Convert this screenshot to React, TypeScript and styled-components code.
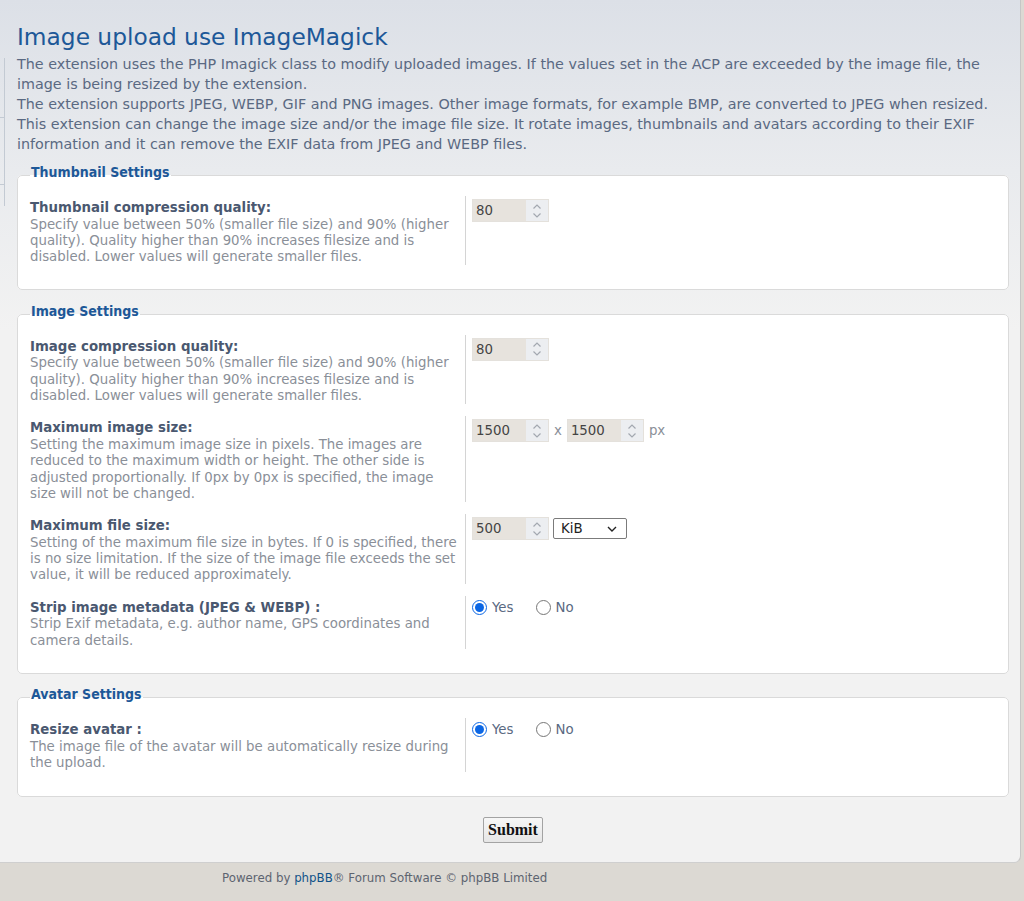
import React from 'react';
import styled, { createGlobalStyle } from 'styled-components';

const GlobalStyle = createGlobalStyle`
  html, body {
    margin: 0;
    padding: 0;
  }
  body {
    background: #dcd9d3;
    font-family: "DejaVu Sans", Verdana, sans-serif;
    font-size: 13.33px;
  }
`;

type Section = {
  legend: string;
  rows: { label: string; desc: string; control: React.ReactNode }[];
};

function Spinner() {
  return (
    <svg width="10" height="18" viewBox="0 0 10 18" fill="none" stroke="#a3a8b0" strokeWidth="1.2">
      <path d="M1.5 6.5 L5 3 L8.5 6.5" />
      <path d="M1.5 11.5 L5 15 L8.5 11.5" />
    </svg>
  );
}

function NumberField({ value }: { value: string }) {
  return (
    <NumberBox>
      <NumberInput type="text" value={value} readOnly />
      <SpinArea>
        <Spinner />
      </SpinArea>
    </NumberBox>
  );
}

function YesNo({ yes }: { yes: boolean }) {
  return (
    <RadioGroup>
      <RadioLabel>
        <Radio type="radio" defaultChecked={yes} />
        Yes
      </RadioLabel>
      <RadioLabel>
        <Radio type="radio" defaultChecked={!yes} />
        No
      </RadioLabel>
    </RadioGroup>
  );
}

function UnitSelect() {
  return (
    <SelectWrap>
      <Select defaultValue="KiB">
        <option>B</option>
        <option>KiB</option>
        <option>MiB</option>
      </Select>
      <Chevron width="10" height="6" viewBox="0 0 10 6" fill="none" stroke="#222" strokeWidth="1.4">
        <path d="M1 1 L5 5 L9 1" />
      </Chevron>
    </SelectWrap>
  );
}

function getSections(): Section[] {
  const quality =
    'Specify value between 50% (smaller file size) and 90% (higher quality). Quality higher than 90% increases filesize and is disabled. Lower values will generate smaller files.';
  return [
    {
      legend: 'Thumbnail Settings',
      rows: [{ label: 'Thumbnail compression quality:', desc: quality, control: <NumberField value="80" /> }],
    },
    {
      legend: 'Image Settings',
      rows: [
        { label: 'Image compression quality:', desc: quality, control: <NumberField value="80" /> },
        {
          label: 'Maximum image size:',
          desc: 'Setting the maximum image size in pixels. The images are reduced to the maximum width or height. The other side is adjusted proportionally. If 0px by 0px is specified, the image size will not be changed.',
          control: (
            <Inline>
              <NumberField value="1500" />
              <Unit>x</Unit>
              <NumberField value="1500" />
              <Unit>px</Unit>
            </Inline>
          ),
        },
        {
          label: 'Maximum file size:',
          desc: 'Setting of the maximum file size in bytes. If 0 is specified, there is no size limitation. If the size of the image file exceeds the set value, it will be reduced approximately.',
          control: (
            <Inline>
              <NumberField value="500" />
              <UnitSelect />
            </Inline>
          ),
        },
        {
          label: 'Strip image metadata (JPEG & WEBP) :',
          desc: 'Strip Exif metadata, e.g. author name, GPS coordinates and camera details.',
          control: <YesNo yes />,
        },
      ],
    },
    {
      legend: 'Avatar Settings',
      rows: [
        {
          label: 'Resize avatar :',
          desc: 'The image file of the avatar will be automatically resize during the upload.',
          control: <YesNo yes />,
        },
      ],
    },
  ];
}

export default function App() {
  const sections = getSections();
  return (
    <>
      <GlobalStyle />
      <Panel>
        <SideEdge />
        <Title>Image upload use ImageMagick</Title>
        <Intro>
          The extension uses the PHP Imagick class to modify uploaded images. If the values set in the ACP are exceeded by the image file, the
          <br />
          image is being resized by the extension.
          <br />
          The extension supports JPEG, WEBP, GIF and PNG images. Other image formats, for example BMP, are converted to JPEG when resized.
          <br />
          This extension can change the image size and/or the image file size. It rotate images, thumbnails and avatars according to their EXIF
          <br />
          information and it can remove the EXIF data from JPEG and WEBP files.
        </Intro>
        <form>
          {sections.map((section) => (
            <Fieldset key={section.legend}>
              <Legend>{section.legend}</Legend>
              {section.rows.map((row) => (
                <Row key={row.label}>
                  <Term>
                    <Label>{row.label}</Label>
                    <Desc>{row.desc}</Desc>
                  </Term>
                  <Def>{row.control}</Def>
                </Row>
              ))}
            </Fieldset>
          ))}
          <SubmitRow>
            <SubmitButton type="button">Submit</SubmitButton>
          </SubmitRow>
        </form>
      </Panel>
      <Footer>
        Powered by <FooterLink>phpBB</FooterLink>® Forum Software © phpBB Limited
      </Footer>
    </>
  );
}

const Panel = styled.main`
  position: relative;
  margin-right: 3px;
  padding: 22px 11px 19px 17px;
  background: linear-gradient(180deg, #dce0e7 0px, #e9ebee 170px, #f2f2f2 330px, #f2f2f2 100%);
  border-right: 1px solid #c6c6c6;
  border-bottom: 1px solid #cfcfcf;
  border-bottom-right-radius: 7px;
`;

const SideEdge = styled.div`
  position: absolute;
  left: 4px;
  top: 58px;
  width: 1px;
  height: 148px;
  background: #c3cad3;

  &::before,
  &::after {
    content: '';
    position: absolute;
    right: 1px;
    width: 4px;
    height: 1px;
    background: #c3cad3;
  }
  &::before {
    top: 59px;
  }
  &::after {
    top: 126px;
  }
`;

const Title = styled.h1`
  margin: 0;
  font-size: 23.3px;
  line-height: 30px;
  font-weight: normal;
  color: #1d5898;
`;

const Intro = styled.p`
  margin: 2px 0 10px;
  font-size: 14.33px;
  line-height: 20px;
  color: #5a6982;
`;

const Fieldset = styled.fieldset`
  margin: 0 0 12.5px;
  padding: 0 12px 12px;
  min-width: 0;
  background: #fff;
  border: 1px solid #dadada;
  border-radius: 5px;
`;

const Legend = styled.legend`
  padding: 0 1px 7px;
  font-family: "DejaVu Sans Condensed", "DejaVu Sans", sans-serif;
  font-stretch: condensed;
  font-weight: bold;
  font-size: 14px;
  line-height: 16px;
  color: #1d5898;
`;

const Row = styled.dl`
  display: flex;
  align-items: flex-start;
  margin: 9px 0 12px;

  & + & {
    margin-top: 0;
  }
`;

const Term = styled.dt`
  box-sizing: border-box;
  width: 436px;
  flex: none;
  padding: 4px 5px 0 0;
  border-right: 1px solid #d4d4d4;
`;

const Label = styled.label`
  display: block;
  font-weight: bold;
  font-size: 13.33px;
  line-height: 16.5px;
  color: #4a5870;
`;

const Desc = styled.span`
  display: block;
  font-size: 13.33px;
  line-height: 16.33px;
  color: #8a8f98;
`;

const Def = styled.dd`
  margin: 0 0 0 6px;
  padding-top: 3px;
`;

const Inline = styled.div`
  display: flex;
  align-items: center;
  gap: 4px;
`;

const NumberBox = styled.div`
  display: inline-flex;
  box-sizing: border-box;
  width: 77px;
  height: 23px;
  background: #e7e3dd;
  border: 1px solid #e4e1dc;
`;

const NumberInput = styled.input`
  flex: 1;
  min-width: 0;
  border: none;
  outline: none;
  background: transparent;
  padding: 0 0 0 3px;
  font-family: "DejaVu Sans", Verdana, sans-serif;
  font-size: 13.33px;
  color: #444;
`;

const SpinArea = styled.div`
  width: 22px;
  display: flex;
  align-items: center;
  justify-content: center;
  background: #eceef1;
`;

const Unit = styled.span`
  font-size: 13.33px;
  color: #8a8f98;
  padding: 0 1px;
`;

const SelectWrap = styled.div`
  position: relative;
  display: inline-block;
`;

const Select = styled.select`
  appearance: none;
  box-sizing: border-box;
  width: 74px;
  height: 21px;
  padding: 0 0 0 7px;
  background: #fff;
  border: 1px solid #7b7b7b;
  border-radius: 2px;
  font-family: "DejaVu Sans", Verdana, sans-serif;
  font-size: 13.33px;
  color: #222;
`;

const Chevron = styled.svg`
  position: absolute;
  right: 10px;
  top: 8px;
  pointer-events: none;
`;

const RadioGroup = styled.div`
  display: flex;
  gap: 22px;
  padding-top: 1px;
`;

const RadioLabel = styled.label`
  display: inline-flex;
  align-items: center;
  gap: 5px;
  font-size: 13.33px;
  color: #5a6982;
`;

const Radio = styled.input`
  width: 15px;
  height: 15px;
  margin: 0;
  accent-color: #0b66e4;
`;

const SubmitRow = styled.div`
  display: flex;
  justify-content: center;
  padding-top: 8px;
`;

const SubmitButton = styled.button`
  box-sizing: border-box;
  width: 60px;
  height: 26px;
  padding: 0;
  font-family: "Liberation Serif", "Times New Roman", serif;
  font-weight: bold;
  font-size: 16px;
  color: #111;
  background: linear-gradient(180deg, #f7f7f7 0%, #e6e6e6 100%);
  border: 1px solid #a3a3a3;
  border-radius: 2px;
`;

const Footer = styled.footer`
  height: 38px;
  padding-left: 222px;
  font-size: 11.8px;
  line-height: 30px;
  color: #5d6470;
`;

const FooterLink = styled.a`
  color: #105289;
  text-decoration: none;
`;
